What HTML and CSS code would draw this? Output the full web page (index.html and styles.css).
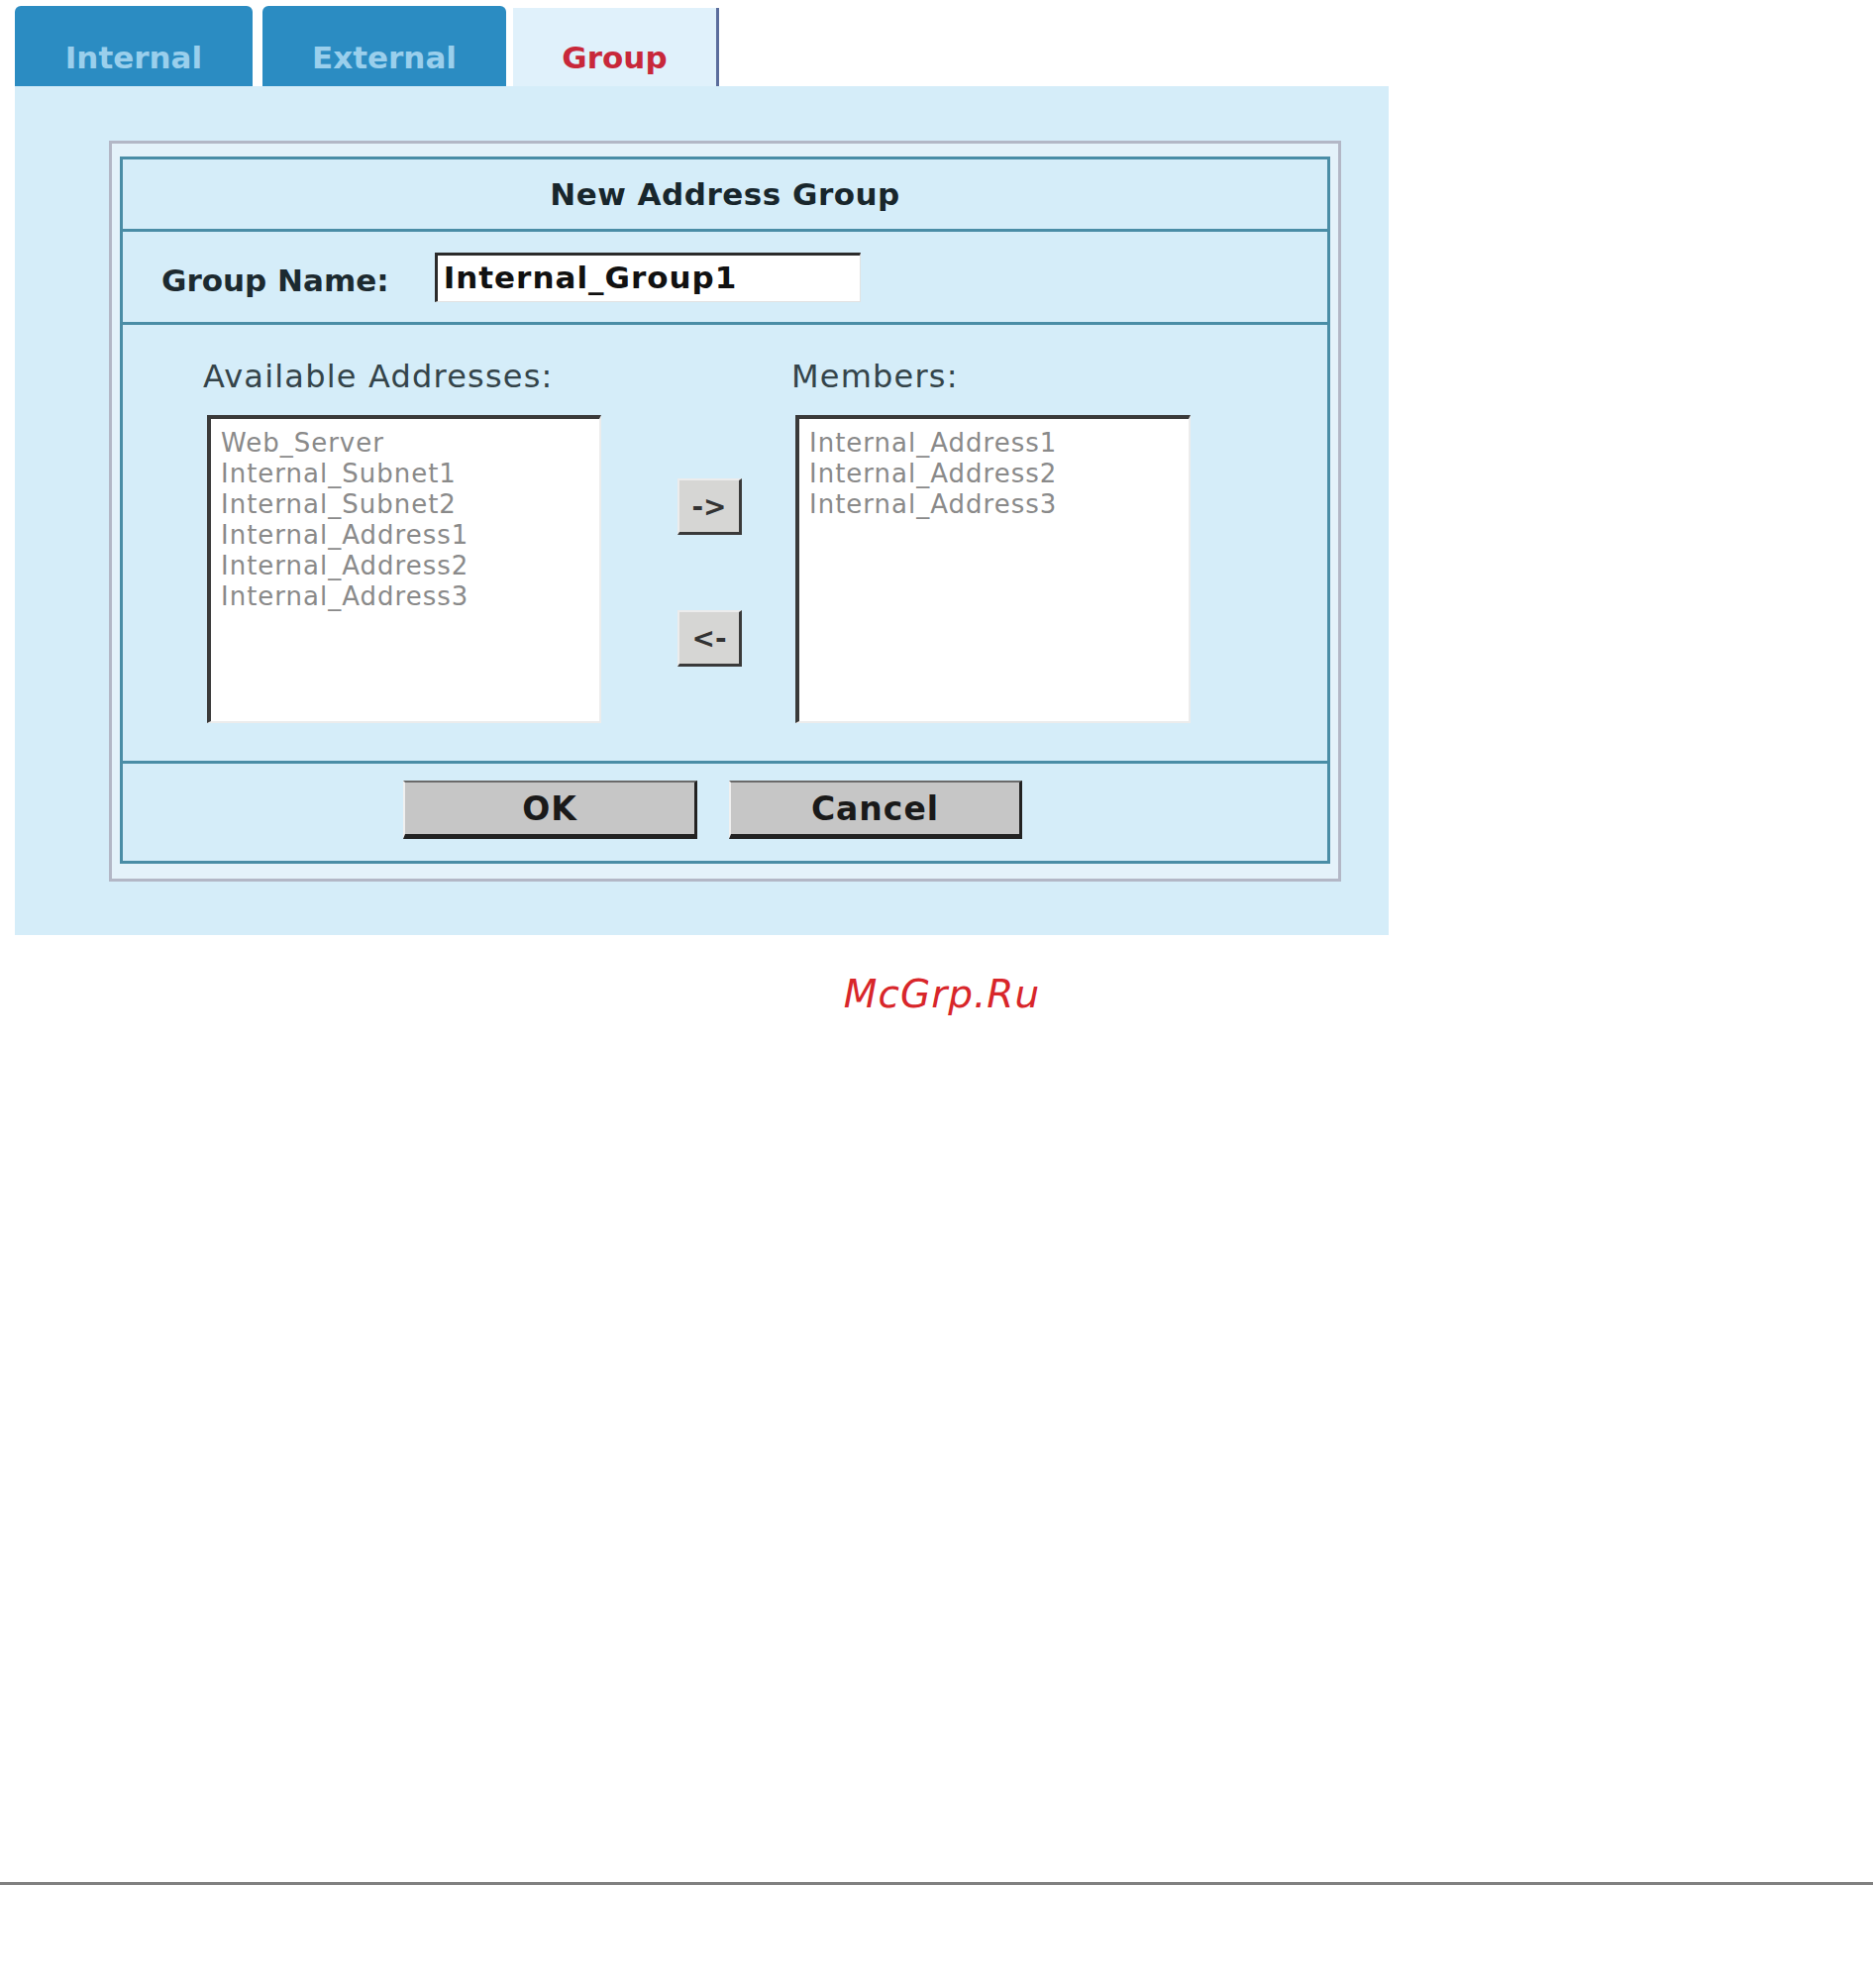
FILE: index.html
```html
<!DOCTYPE html>
<html lang="en">
<head>
  <meta charset="UTF-8" />
  <title>New Address Group</title>
  <link rel="stylesheet" href="styles.css">
</head>
<body>

  <div class="frame">
    <!-- Tabs -->
    <div class="tabs">
      <div class="tab">Internal</div>
      <div class="tab tab-ext">External</div>
      <div class="tab active">Group</div>
    </div>

    <!-- Tab Panel -->
    <div class="panel">
      <div class="dialog">
        <div class="dialog-inner">

          <div class="row title-row">New Address Group</div>

          <div class="row name-row">
            <label class="name-label">Group Name:</label>
            <div class="name-input">Internal_Group1</div>
          </div>

          <div class="row lists-row">
            <div class="list-label">Available Addresses:</div>
            <div></div>
            <div class="list-label">Members:</div>

            <div class="listbox">
              <div>Web_Server</div>
              <div>Internal_Subnet1</div>
              <div>Internal_Subnet2</div>
              <div>Internal_Address1</div>
              <div>Internal_Address2</div>
              <div>Internal_Address3</div>
            </div>
            <div class="movers">
              <button class="mover">-&gt;</button>
              <button class="mover">&lt;-</button>
            </div>
            <div class="listbox">
              <div>Internal_Address1</div>
              <div>Internal_Address2</div>
              <div>Internal_Address3</div>
            </div>
          </div>

          <div class="row button-row">
            <button class="btn btn-ok">OK</button>
            <button class="btn btn-cancel">Cancel</button>
          </div>

        </div>
      </div>
    </div>
  </div>

  <div class="brand">McGrp.Ru</div>

  <div class="rule"></div>

</body>
</html>
```

FILE: styles.css
```css
body {
  margin: 0;
  padding: 0;
  background-color: #ffffff;
  font-family: 'DejaVu Sans', Verdana, sans-serif;
}

.frame {
  margin: 6px 0 0 15px;
}

/* Tabs */
.tabs {
  display: flex;
  align-items: flex-end;
}

.tab {
  box-sizing: border-box;
  width: 240px;
  height: 81px;
  padding-top: 34px;
  margin-right: 10px;
  background-color: #2b8cc2;
  border-radius: 6px 6px 0 0;
  color: #9acfec;
  font-size: 31px;
  font-weight: bold;
  line-height: 37px;
  text-align: center;
}

.tab-ext {
  width: 246px;
  margin-right: 7px;
}

.tab.active {
  width: 208px;
  height: 79px;
  padding-top: 32px;
  background-color: #e0f1fb;
  border-right: 3px solid #5b6d9c;
  border-radius: 0;
  color: #c8283a;
}

.panel {
  box-sizing: border-box;
  width: 1387px;
  height: 857px;
  padding: 55px 0 0 95px;
  background-color: #d5edf9;
}

/* Dialog box */
.dialog {
  width: 1222px;
  padding: 13px 8px 15px 8px;
  border: 3px solid #b3b7c6;
  background-color: #e4f2fa;
}

.dialog-inner {
  border: 3px solid #4a8da6;
  background-color: #d5edf9;
}

.row {
  border-bottom: 3px solid #4a8da6;
}

.row.button-row {
  border-bottom: none;
}

.title-row {
  height: 70px;
  line-height: 70px;
  text-align: center;
  font-size: 31px;
  font-weight: bold;
  letter-spacing: 0.5px;
  color: #18262c;
}

.name-row {
  display: flex;
  align-items: center;
  gap: 46px;
  height: 91px;
  padding-left: 39px;
}

.name-label {
  font-size: 31px;
  font-weight: bold;
  color: #1c2a30;
  margin-top: 6px;
}

.name-input {
  box-sizing: border-box;
  width: 430px;
  height: 50px;
  padding: 2px 0 0 6px;
  background-color: #ffffff;
  border-top: 3px solid #2b2b2b;
  border-left: 3px solid #2b2b2b;
  border-right: 1px solid #e2e2e2;
  border-bottom: 1px solid #e2e2e2;
  font-size: 31px;
  font-weight: bold;
  letter-spacing: 1px;
  color: #111111;
  line-height: 40px;
}

/* Address lists */
.lists-row {
  display: grid;
  grid-template-columns: 398px 196px 399px;
  row-gap: 20px;
  height: 443px;
  box-sizing: border-box;
  padding: 33px 0 0 85px;
  align-content: start;
}

.list-label {
  font-size: 32px;
  line-height: 38px;
  letter-spacing: 1.2px;
  color: #34444a;
  margin-left: -4px;
}

.listbox {
  box-sizing: border-box;
  height: 311px;
  padding: 9px 0 0 10px;
  background-color: #ffffff;
  border-top: 4px solid #3a3a3a;
  border-left: 4px solid #3a3a3a;
  border-right: 2px solid #ececec;
  border-bottom: 2px solid #ececec;
  font-size: 26px;
  line-height: 31px;
  letter-spacing: 1px;
  color: #8a8a8a;
}

.movers {
  display: flex;
  flex-direction: column;
  gap: 76px;
  padding: 64px 0 0 77px;
}

.mover {
  box-sizing: border-box;
  width: 65px;
  height: 57px;
  padding: 0;
  background-color: #d6d6d4;
  border-top: 2px solid #ececec;
  border-left: 2px solid #ececec;
  border-right: 3px solid #3a3a3a;
  border-bottom: 3px solid #3a3a3a;
  font-family: 'DejaVu Sans', sans-serif;
  font-size: 28px;
  font-weight: bold;
  color: #333333;
}

/* OK / Cancel */
.button-row {
  display: flex;
  gap: 32px;
  height: 98px;
  box-sizing: border-box;
  padding: 17px 0 0 283px;
}

.btn {
  box-sizing: border-box;
  width: 297px;
  height: 59px;
  padding: 0;
  background-color: #c6c6c6;
  border-top: 2px solid #6a6a6a;
  border-left: 2px solid #f0f0f0;
  border-right: 3px solid #222222;
  border-bottom: 5px solid #222222;
  font-family: 'DejaVu Sans', sans-serif;
  font-size: 33px;
  font-weight: bold;
  letter-spacing: 1px;
  color: #1a1a1a;
}

.btn-cancel {
  width: 296px;
}

.brand {
  margin-top: 36px;
  padding-left: 11px;
  text-align: center;
  font-size: 39px;
  font-style: italic;
  letter-spacing: 1px;
  line-height: 48px;
  color: #d8262a;
}

.rule {
  margin-top: 872px;
  height: 3px;
  background-color: #808080;
}
```
